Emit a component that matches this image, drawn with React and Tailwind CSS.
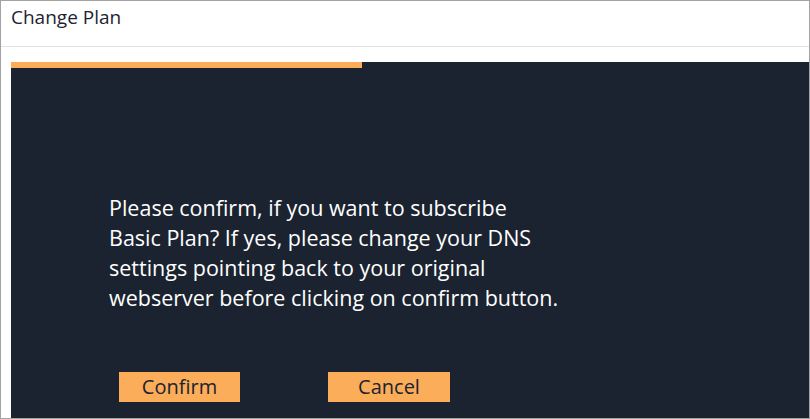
import React from 'react';

const ChangePlan = () => {
  const progress = 44;

  return (
    <div className="h-[419px] w-[810px] overflow-hidden border border-[#a3a3a3] bg-white font-['Open_Sans',sans-serif]">
      <div className="flex h-[46px] items-start border-b border-[#e3e3e3] px-[10px] pt-[4px]">
        <h2 className="text-[19px] leading-[24px] text-[#1c2431]">Change Plan</h2>
      </div>
      <div className="ml-[10px] mt-[15px] h-[360px] bg-[#1b2330]">
        <div className="h-[6px] bg-[#fbad5a]" style={{ width: `${progress}%` }} />
        <div className="pl-[98px] pt-[125px]">
          <p className="text-[21.5px] leading-[30px] text-white">
            Please confirm, if you want to subscribe
            <br />
            Basic Plan? If yes, please change your DNS
            <br />
            settings pointing back to your original
            <br />
            webserver before clicking on confirm button.
          </p>
          <div className="mt-[59px] flex gap-[88px] pl-[10px]">
            <button className="h-[30px] w-[121px] bg-[#fbad5a] text-[20px] leading-[30px] text-[#1b2330]">Confirm</button>
            <button className="h-[30px] w-[122px] bg-[#fbad5a] text-[20px] leading-[30px] text-[#1b2330]">Cancel</button>
          </div>
        </div>
      </div>
    </div>
  );
};

export default function App() {
  return <ChangePlan />;
}
